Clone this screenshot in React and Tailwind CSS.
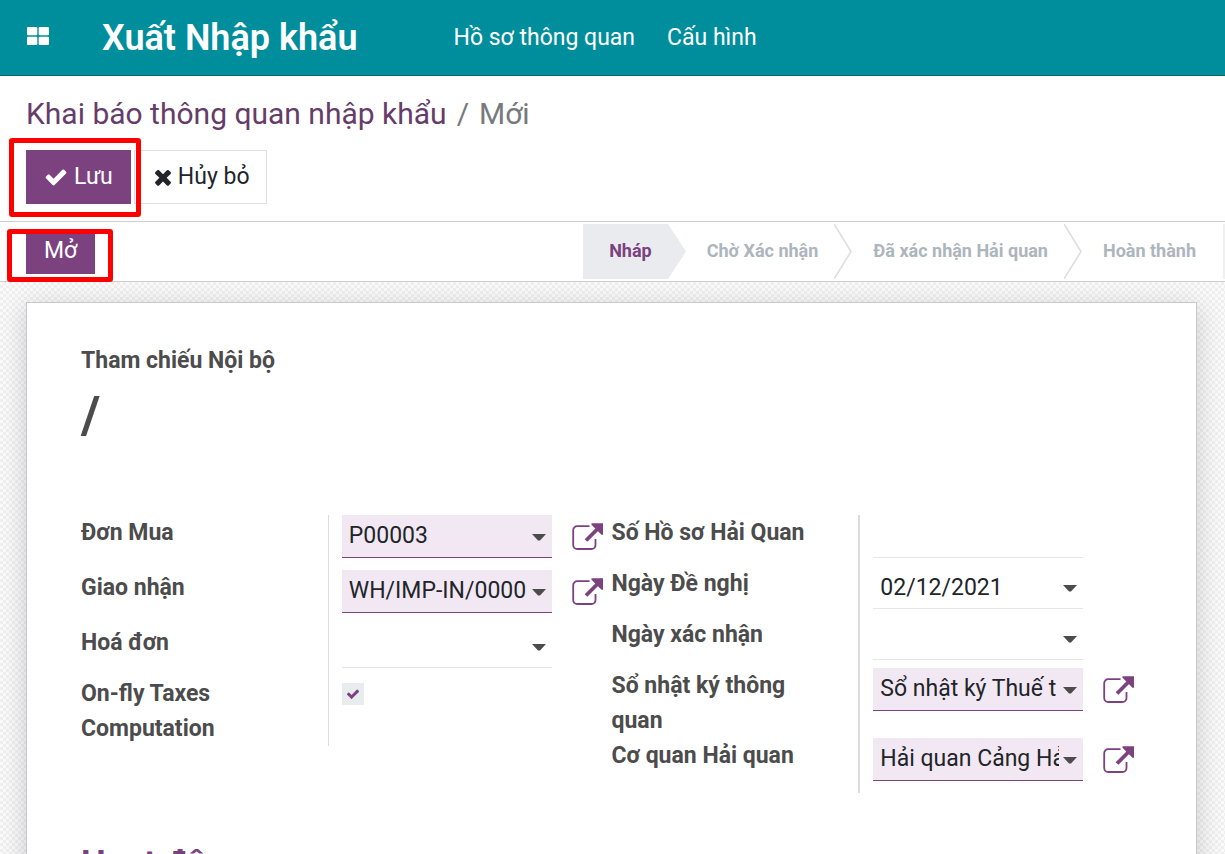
import { useState } from 'react';

const icons = {
  check:
    'M1671 566q0 40-28 68l-724 724-136 136q-28 28-68 28t-68-28l-136-136-362-362q-28-28-28-68t28-68l136-136q28-28 68-28t68 28l294 295 656-657q28-28 68-28t68 28l136 136q28 28 28 68z',
  times:
    'M1490 1322q0 40-28 68l-136 136q-28 28-68 28t-68-28l-294-294-294 294q-28 28-68 28t-68-28l-136-136q-28-28-28-68t28-68l294-294-294-294q-28-28-28-68t28-68l136-136q28-28 68-28t68 28l294 294 294-294q28-28 68-28t68 28l136 136q28 28 28 68t-28 68l-294 294 294 294q28 28 28 68z',
};

function Icon({ name, className }) {
  return (
    <svg viewBox="0 0 1792 1792" fill="currentColor" aria-hidden="true" className={className}>
      <path d={icons[name]} />
    </svg>
  );
}

function Caret() {
  return (
    <svg viewBox="0 0 14 7" aria-hidden="true" className="pointer-events-none absolute top-[19px] right-1.5 h-[7px] w-3.5 fill-[#4c4c4c]">
      <path d="M0 0h14L8 6.5H6z" />
    </svg>
  );
}

function ExternalButton({ label }) {
  return (
    <button type="button" aria-label={label} className="mt-2 ml-5 h-7 w-8 shrink-0 text-[#7c417f]">
      <svg viewBox="0 0 32 28" fill="none" stroke="currentColor" className="h-7 w-8">
        <path strokeWidth="1.8" d="M17.5 3.2H5.2a4 4 0 0 0-4 4V22a4 4 0 0 0 4 4h14.3a4 4 0 0 0 4-4v-6" />
        <path strokeWidth="3.8" d="M14 17.5 26.5 5" />
        <path fill="currentColor" stroke="none" d="M19.5.3H31v11.4h-1.5L19.5 1.8z" />
      </svg>
    </button>
  );
}

function Row({ id, label, thick, external, children }) {
  return (
    <div className="grid grid-cols-[87fr_100fr]">
      <label htmlFor={id} className="pr-12 text-[23px] leading-[35px] font-bold text-[#4c4c4c]">
        {label}
      </label>
      <div className={`flex min-w-0 items-start pl-[13px] ${thick ? 'border-l-2' : 'border-l'} border-[#dcdcdc] ${external ? 'pb-3' : 'pb-2'}`}>
        {children}
        {external && <ExternalButton label={`${label}: mở liên kết`} />}
      </div>
    </div>
  );
}

const fieldBase = 'block h-[43px] w-full appearance-none rounded-none border-b pl-[7px] text-[23px] text-[#212529] outline-none';
const fieldRequired = 'border-[#7c417f] bg-[#f2e8f3]';
const fieldPlain = 'border-[#e4e7e9] bg-transparent';

function SelectField({ id, options, required }) {
  return (
    <div className="relative w-[210px] min-w-0">
      <select id={id} className={`${fieldBase} pr-6 ${required ? fieldRequired : fieldPlain}`}>
        {options.map((option) => (
          <option key={option}>{option}</option>
        ))}
      </select>
      <Caret />
    </div>
  );
}

function TextField({ id, value = '', caret }) {
  return (
    <div className="relative w-[210px] min-w-0">
      <input id={id} type="text" defaultValue={value} className={`${fieldBase} pr-6 ${fieldPlain}`} />
      {caret && <Caret />}
    </div>
  );
}

function StepArrow({ filled }) {
  return (
    <svg viewBox="0 0 18 55" preserveAspectRatio="none" aria-hidden="true" className="h-full w-[18px] shrink-0">
      {filled ? (
        <path d="M0 0 18 27.5 0 55z" fill="#e9ebef" />
      ) : (
        <path d="M0 0 17 27.5 0 55" fill="none" stroke="#dcdee1" strokeWidth="1.6" />
      )}
    </svg>
  );
}

const steps = ['Nháp', 'Chờ Xác nhận', 'Đã xác nhận Hải quan', 'Hoàn thành'];

export default function App() {
  const [taxes, setTaxes] = useState(true);

  return (
    <div className="flex h-screen flex-col overflow-hidden bg-white font-['Roboto','Noto_Sans',sans-serif]">
      {/* Main navbar */}
      <header className="flex h-[76px] shrink-0 items-center border-b border-[#1c5f69] bg-[#008e9c] pl-[27px] text-white">
        <button type="button" aria-label="Ứng dụng" className="mb-1">
          <svg viewBox="0 0 22 18" fill="currentColor" className="h-[18px] w-[22px]">
            <rect width="10.3" height="8.3" rx="1" />
            <rect x="11.7" width="10.3" height="8.3" rx="1" />
            <rect y="9.7" width="10.3" height="8.3" rx="1" />
            <rect x="11.7" y="9.7" width="10.3" height="8.3" rx="1" />
          </svg>
        </button>
        <a href="#" className="ml-[53px] text-[36px] font-semibold">Xuất Nhập khẩu</a>
        <nav className="ml-24 flex gap-8 pt-0.5 text-[23px]">
          <a href="#">Hồ sơ thông quan</a>
          <a href="#">Cấu hình</a>
        </nav>
      </header>

      {/* Control panel */}
      <div className="shrink-0 border-b border-[#cccfd1] px-[26px] pt-4 pb-[17px]">
        <nav className="flex gap-2.5 text-[30px] leading-[44px] text-[#777a7d]">
          <a href="#" className="text-[#663c6b]">Khai báo thông quan nhập khẩu</a>
          <span>/</span>
          <span>Mới</span>
        </nav>
        <div className="mt-[14px] flex gap-[3px] text-[23px]">
          <div className="relative">
            <button type="button" className="flex h-[54px] items-center gap-1.5 bg-[#7c417f] px-[18px] text-white">
              <Icon name="check" className="h-6 w-6" />
              Lưu
            </button>
            <div className="pointer-events-none absolute -top-3 -right-2.5 -bottom-[13px] -left-[17px] rounded-[3px] border-5 border-[#ff0000]" />
          </div>
          <button type="button" className="flex h-[54px] items-center gap-[3px] border border-[#dee0e2] px-4 text-[#212529]">
            <Icon name="times" className="h-6 w-6" />
            Hủy bỏ
          </button>
        </div>
      </div>

      {/* Status bar */}
      <div className="flex h-[60px] shrink-0 justify-between border-b border-[#cccfd1] pl-[26px]">
        <div className="relative z-10 mt-[7px] h-[45px]">
          <button type="button" className="h-full bg-[#7c417f] px-[18px] text-[23px] text-white">Mở</button>
          <div className="pointer-events-none absolute top-0 -right-[18px] -bottom-2 -left-[19px] rounded-[3px] border-5 border-[#ff0000]" />
        </div>
        <ol className="my-0.5 flex border-r-2 border-[#f0f0f0] text-[18px] font-bold text-[#adb5bd]">
          {steps.map((step, i) => (
            <li key={step} className="flex">
              <button
                type="button"
                className={`pb-0.5 font-bold ${i === 0 ? 'bg-[#e9ebef] pr-4 pl-[26px] text-[#7c417f]' : 'pl-[21px]'} ${i === steps.length - 1 ? 'pr-[27px]' : 'pr-4'}`}
              >
                {step}
              </button>
              {i < steps.length - 1 && <StepArrow filled={i === 0} />}
            </li>
          ))}
        </ol>
      </div>

      {/* Form sheet */}
      <main className="min-h-0 flex-1 overflow-hidden bg-[#f9f9f9] bg-[repeating-conic-gradient(#efefef_0_25%,#fafafa_0_50%)] bg-[length:6px_6px] pt-5 pr-7 pl-[26px]">
        <div className="min-h-full border border-[#c8c8d3] bg-white px-[54px] pt-10 shadow-[0_5px_24px_rgba(0,0,0,0.18)]">
          <p className="text-[23px] leading-[35px] font-bold text-[#4c4c4c]">Tham chiếu Nội bộ</p>
          <h1 className="text-[52px] leading-[76px] font-bold text-[#4c4c4c]">/</h1>

          <div className="mt-[61px] grid grid-cols-2 items-start">
            <div>
              <Row id="purchase" label="Đơn Mua" external>
                <SelectField id="purchase" options={['P00003']} required />
              </Row>
              <Row id="picking" label="Giao nhận" external>
                <SelectField id="picking" options={['WH/IMP-IN/0000']} required />
              </Row>
              <Row id="invoice" label="Hoá đơn">
                <SelectField id="invoice" options={['']} />
              </Row>
              <Row id="taxes" label="On-fly Taxes Computation">
                <div className="relative mt-[7px] h-[22px] w-[22px]">
                  <input
                    id="taxes"
                    type="checkbox"
                    checked={taxes}
                    onChange={(e) => setTaxes(e.target.checked)}
                    className="block h-full w-full appearance-none bg-[#e9ecef]"
                  />
                  {taxes && <Icon name="check" className="pointer-events-none absolute top-1 left-1 h-3.5 w-3.5 text-[#7c417f]" />}
                </div>
              </Row>
            </div>
            <div>
              <Row id="number" label="Số Hồ sơ Hải Quan" thick>
                <TextField id="number" />
              </Row>
              <Row id="request-date" label="Ngày Đề nghị" thick>
                <TextField id="request-date" value="02/12/2021" caret />
              </Row>
              <Row id="confirm-date" label="Ngày xác nhận" thick>
                <TextField id="confirm-date" caret />
              </Row>
              <Row id="journal" label="Sổ nhật ký thông quan" thick external>
                <SelectField id="journal" options={['Sổ nhật ký Thuế t']} required />
              </Row>
              <Row id="authority" label="Cơ quan Hải quan" thick external>
                <SelectField id="authority" options={['Hải quan Cảng Hải']} required />
              </Row>
            </div>
          </div>

          <h2 className="mt-[50px] text-[35px] leading-[42px] font-bold text-[#7c417f]">Hoạt động</h2>
        </div>
      </main>
    </div>
  );
}
